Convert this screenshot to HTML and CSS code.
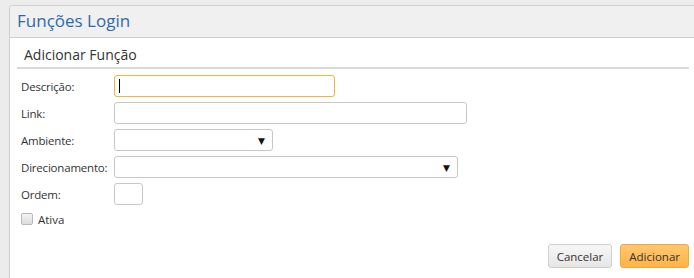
FILE: index.html
```html
<!DOCTYPE html>
<html>
<head>
<meta charset="utf-8">
<link rel="stylesheet" href="styles.css">
</head>
<body>
<div class="panel">
  <div class="panel-head">Funções Login</div>
  <div class="panel-body">
    <div class="section-title">Adicionar Função</div>
    <form class="form">
      <div class="row">
        <label class="lbl">Descrição:</label>
        <div class="field focus w-desc"><span class="caret"></span></div>
      </div>
      <div class="row">
        <label class="lbl">Link:</label>
        <div class="field w-link"></div>
      </div>
      <div class="row">
        <label class="lbl">Ambiente:</label>
        <div class="field select w-amb"><span class="arrow">▼</span></div>
      </div>
      <div class="row">
        <label class="lbl">Direcionamento:</label>
        <div class="field select w-dir"><span class="arrow">▼</span></div>
      </div>
      <div class="row">
        <label class="lbl">Ordem:</label>
        <div class="field w-ord"></div>
      </div>
      <div class="check-row">
        <span class="check"></span>
        <span class="check-lbl">Ativa</span>
      </div>
    </form>
    <div class="actions">
      <button type="button" class="btn btn-cancel">Cancelar</button>
      <button type="button" class="btn btn-add">Adicionar</button>
    </div>
  </div>
</div>
</body>
</html>
```
FILE: styles.css
```css
html, body {
  margin: 0;
  padding: 0;
}
body {
  background: #ececec;
  font-family: "Open Sans", "DejaVu Sans", sans-serif;
  color: #333;
  height: 278px;
  overflow: hidden;
  padding: 5px 0 0 9px;
  box-sizing: border-box;
}
.panel {
  border: 1px solid #cfcfcf;
  border-right: none;
  border-bottom: none;
  border-top-left-radius: 4px;
  background: #fff;
  height: 100%;
  box-sizing: border-box;
}
.panel-head {
  background: #f0f0f0;
  border-bottom: 1px solid #cfcfcf;
  border-top-left-radius: 4px;
  height: 32px;
  box-sizing: border-box;
  padding: 2px 0 0 7px;
  font-size: 17px;
  line-height: 26px;
  color: #2f6aa6;
}
.panel-body {
  padding: 0 5px 0 7px;
}
.section-title {
  font-size: 14px;
  line-height: 20px;
  padding: 7px 0 2px 7px;
  border-bottom: 2px solid #d9d9d9;
  color: #333;
}
.form {
  padding: 6px 0 0 4px;
}
.row {
  display: flex;
  align-items: center;
  height: 22px;
  margin-bottom: 5px;
}
.lbl {
  width: 93px;
  font-size: 11.5px;
  color: #333;
  letter-spacing: -0.2px;
}
.field {
  height: 22px;
  box-sizing: border-box;
  border: 1px solid #c8c8c8;
  border-radius: 3px;
  background: #fff;
  position: relative;
}
.field.focus {
  border-color: #f5b041;
}
.caret {
  position: absolute;
  left: 4px;
  top: 3px;
  width: 1px;
  height: 14px;
  background: #000;
}
.w-desc { width: 221px; }
.w-link { width: 353px; }
.w-amb { width: 159px; }
.w-dir { width: 344px; }
.w-ord { width: 29px; }
.select {
  display: flex;
  justify-content: flex-end;
  align-items: center;
}
.arrow {
  font-size: 9px;
  color: #111;
  margin-right: 7px;
  line-height: 1;
}
.check-row {
  display: flex;
  align-items: center;
  margin-top: 7px;
  height: 14px;
}
.check {
  width: 10px;
  height: 10px;
  border: 1px solid #b8b8b8;
  border-radius: 2px;
  background: linear-gradient(#f4f4f4, #dcdcdc);
  margin-right: 5px;
}
.check-lbl {
  font-size: 11.5px;
  color: #333;
}
.actions {
  display: flex;
  justify-content: flex-end;
  gap: 8px;
  margin-top: 18px;
}
.btn {
  height: 24px;
  box-sizing: border-box;
  border-radius: 3px;
  font-family: "Open Sans", "DejaVu Sans", sans-serif;
  font-size: 11.5px;
  color: #333;
  padding: 0 8px;
  cursor: pointer;
}
.btn-cancel {
  border: 1px solid #cfcfcf;
  background: linear-gradient(#f7f7f7, #e6e6e6);
}
.btn-add {
  border: 1px solid #f3a83b;
  background: linear-gradient(#ffc871, #ffb347);
}
```
